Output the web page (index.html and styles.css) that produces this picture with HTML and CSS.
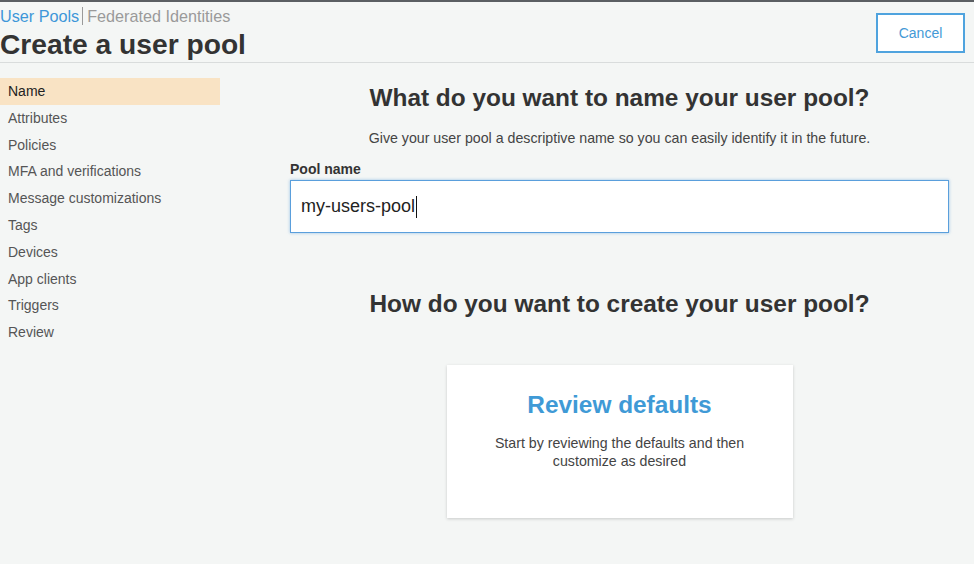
FILE: index.html
```html
<!DOCTYPE html>
<html>
<head>
<meta charset="utf-8">
<link rel="stylesheet" href="styles.css">
</head>
<body>
<div class="page">
  <header class="header">
    <div class="titles">
      <nav class="crumbs"><a class="crumb active">User Pools</a><span class="sep"></span><a class="crumb">Federated Identities</a></nav>
      <h1 class="title">Create a user pool</h1>
    </div>
    <button class="cancel">Cancel</button>
  </header>
  <div class="body">
    <aside class="sidebar">
      <div class="nav-item selected">Name</div>
      <div class="nav-item">Attributes</div>
      <div class="nav-item">Policies</div>
      <div class="nav-item">MFA and verifications</div>
      <div class="nav-item">Message customizations</div>
      <div class="nav-item">Tags</div>
      <div class="nav-item">Devices</div>
      <div class="nav-item">App clients</div>
      <div class="nav-item">Triggers</div>
      <div class="nav-item">Review</div>
    </aside>
    <main class="main">
      <h2 class="section-title">What do you want to name your user pool?</h2>
      <p class="section-desc">Give your user pool a descriptive name so you can easily identify it in the future.</p>
      <label class="field-label">Pool name</label>
      <div class="input"><span>my-users-pool</span><span class="caret"></span></div>
      <h2 class="section-title second">How do you want to create your user pool?</h2>
      <div class="cards">
        <div class="card">
          <div class="card-title">Review defaults</div>
          <p class="card-desc">Start by reviewing the defaults and then customize as desired</p>
        </div>
      </div>
    </main>
  </div>
</div>
</body>
</html>
```
FILE: styles.css
```css
* { box-sizing: border-box; }
html, body { margin: 0; padding: 0; }
body {
  background: #f4f6f5;
  font-family: "Liberation Sans", Arial, sans-serif;
  color: #444;
  width: 974px;
  height: 564px;
  overflow: hidden;
}
.page {
  border-top: 2px solid #5b5f63;
}
.header {
  display: flex;
  justify-content: space-between;
  align-items: flex-start;
  border-bottom: 1px solid #d9dcdc;
  height: 61px;
  padding-right: 9px;
}
.titles { display: flex; flex-direction: column; }
.crumbs {
  display: flex;
  align-items: center;
  font-size: 16.2px;
  line-height: 18px;
  margin-top: 5px;
}
.crumb { color: #9a9a9a; }
.crumb.active { color: #3d97d9; }
.sep {
  width: 1px;
  height: 18px;
  background: #9a9a9a;
  margin: 0 4px 0 3px;
}
.title {
  margin: 2px 0 0 0;
  font-size: 28.2px;
  line-height: 34px;
  font-weight: bold;
  color: #333;
}
.cancel {
  margin-top: 11px;
  width: 89px;
  height: 40px;
  background: #fff;
  border: 2px solid #4fa3de;
  color: #4499d6;
  font-family: "Liberation Sans", Arial, sans-serif;
  font-size: 14px;
  padding: 0;
}
.body {
  display: flex;
  padding-top: 15px;
}
.sidebar {
  width: 220px;
  flex: none;
}
.nav-item {
  height: 26.8px;
  line-height: 26.8px;
  padding-left: 8px;
  font-size: 14px;
  color: #555;
}
.nav-item.selected {
  background: #f9e3c4;
  color: #222;
}
.main {
  margin-left: 70px;
  width: 659px;
  display: flex;
  flex-direction: column;
}
.section-title {
  margin: 5px 0 0 0;
  text-align: center;
  font-size: 24.4px;
  line-height: 30px;
  font-weight: bold;
  color: #333;
}
.section-title.second { margin-top: 56px; }
.section-desc {
  margin: 17px 0 0 0;
  text-align: center;
  font-size: 14.2px;
  line-height: 16px;
  color: #444;
}
.field-label {
  margin-top: 15px;
  font-size: 14px;
  line-height: 16px;
  font-weight: bold;
  color: #333;
}
.input {
  margin-top: 3px;
  height: 53px;
  background: #fff;
  border: 1px solid #5a9fdc;
  box-shadow: 0 0 3px rgba(90, 160, 220, 0.6);
  display: flex;
  align-items: center;
  padding-left: 10px;
  font-size: 18px;
  color: #222;
}
.caret {
  display: inline-block;
  width: 1px;
  height: 22px;
  background: #111;
  margin-left: 1px;
}
.cards {
  display: flex;
  justify-content: center;
  margin-top: 46px;
}
.card {
  width: 346px;
  height: 153px;
  background: #fff;
  box-shadow: 0 1px 3px rgba(0, 0, 0, 0.18);
  text-align: center;
  padding-top: 26px;
}
.card-title {
  font-size: 24.4px;
  line-height: 28px;
  font-weight: bold;
  color: #3f9ad6;
}
.card-desc {
  margin: 15px auto 0;
  width: 272px;
  font-size: 14.2px;
  line-height: 18px;
  color: #444;
}
```
